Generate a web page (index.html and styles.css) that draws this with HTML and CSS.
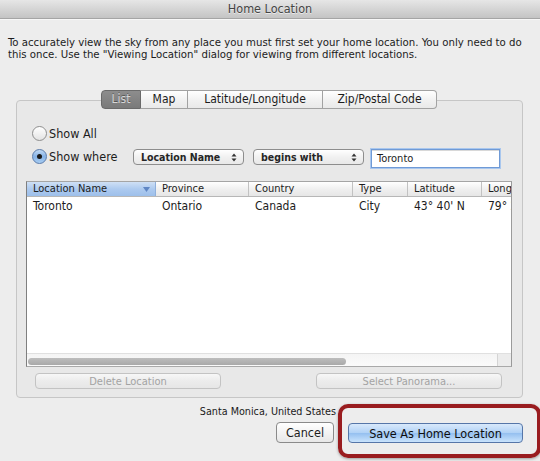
FILE: index.html
```html
<!DOCTYPE html>
<html>
<head>
<meta charset="utf-8">
<title>Home Location</title>
<link rel="stylesheet" href="styles.css">
</head>
<body>
<div class="window">
  <div class="titlebar">Home Location</div>
  <p class="desc">To accurately view the sky from any place you must first set your home location. You only need to do<br>this once. Use the "Viewing Location" dialog for viewing from different locations.</p>

  <div class="group">
    <div class="tabs">
      <span class="tab tab-list selected">List</span>
      <span class="tab tab-map">Map</span>
      <span class="tab tab-lat">Latitude/Longitude</span>
      <span class="tab tab-zip">Zip/Postal Code</span>
    </div>

    <div class="group-body">
      <div class="radio-row">
        <span class="radio"></span>
        <span class="radio-label">Show All</span>
      </div>
      <div class="where-row">
        <span class="radio checked"><span class="dot"></span></span>
        <span class="radio-label where-label">Show where</span>
        <span class="popup popup-field">Location Name
          <svg class="arrows" width="6" height="9" viewBox="0 0 6 9"><path d="M3 0.5 L5.5 3.5 H0.5 Z M3 8.5 L5.5 5.5 H0.5 Z" fill="#333"/></svg>
        </span>
        <span class="popup popup-op">begins with
          <svg class="arrows" width="6" height="9" viewBox="0 0 6 9"><path d="M3 0.5 L5.5 3.5 H0.5 Z M3 8.5 L5.5 5.5 H0.5 Z" fill="#333"/></svg>
        </span>
        <span class="textfield">Toronto</span>
      </div>

      <div class="table">
        <div class="thead">
          <span class="th c-name sorted">Location Name
            <svg class="sort" width="7" height="5" viewBox="0 0 7 5"><path d="M0 0 H7 L3.5 5 Z" fill="#5f86c4"/></svg>
          </span>
          <span class="th c-prov">Province</span>
          <span class="th c-country">Country</span>
          <span class="th c-type">Type</span>
          <span class="th c-lat">Latitude</span>
          <span class="th c-long">Longitude</span>
        </div>
        <div class="tbody">
          <div class="tr">
            <span class="td c-name">Toronto</span>
            <span class="td c-prov">Ontario</span>
            <span class="td c-country">Canada</span>
            <span class="td c-type">City</span>
            <span class="td c-lat">43° 40' N</span>
            <span class="td c-long">79° 23' W</span>
          </div>
        </div>
        <div class="hscroll">
          <div class="track"><div class="thumb"></div></div>
          <div class="corner"></div>
        </div>
      </div>

      <div class="btn-row">
        <span class="btn disabled wide">Delete Location</span>
        <span class="btn disabled wide">Select Panorama...</span>
      </div>
    </div>
  </div>

  <div class="footer">
    <div class="home-text">Santa Monica, United States</div>
    <div class="actions">
      <span class="btn cancel">Cancel</span>
      <span class="btn primary">Save As Home Location</span>
    </div>
  </div>

  <div class="highlight"></div>
</div>
</body>
</html>
```

FILE: styles.css
```css
* { box-sizing: border-box; }

html, body {
  margin: 0;
  padding: 0;
  background: #ececec;
}

body {
  font-family: "DejaVu Sans Condensed", "DejaVu Sans", sans-serif;
  color: #1c1c1c;
}

.window {
  position: relative;
  width: 540px;
  height: 461px;
  overflow: hidden;
  background: #ededed;
}

.titlebar {
  height: 19px;
  line-height: 18px;
  text-align: center;
  font-size: 12.5px;
  color: #444;
  text-shadow: 0 1px 0 rgba(255,255,255,0.6);
  background: linear-gradient(#e6e6e6, #c4c4c4);
  border-bottom: 1px solid #a5a5a5;
  box-shadow: 0 1px 0 #f7f7f7;
}

.desc {
  margin: 18px 0 0 8px;
  font-size: 11.3px;
  line-height: 12px;
  white-space: nowrap;
}

.group {
  margin: 39px 0 0 16px;
  width: 507px;
  height: 298px;
  border: 1px solid #c6c6c6;
  border-radius: 4px;
  background: #e8e8e8;
}

.tabs {
  display: flex;
  justify-content: center;
  margin-top: -11px;
  margin-left: -1px;
  height: 19px;
}

.tab {
  height: 19px;
  line-height: 17px;
  font-size: 12px;
  text-align: center;
  border: 1px solid #a2a2a2;
  border-left: none;
  background: linear-gradient(#ffffff, #f1f1f1 55%, #e9e9e9);
  color: #1c1c1c;
}

.tab-list { width: 40px; border-left: 1px solid #8a8a8a; border-radius: 4px 0 0 4px; }
.tab-map { width: 47px; }
.tab-lat { width: 135px; }
.tab-zip { width: 114px; border-radius: 0 4px 4px 0; }

.tab.selected {
  background: linear-gradient(#8d8d8d, #7a7a7a);
  border-color: #6a6a6a;
  color: #d6d6d6;
  text-shadow: 0 -1px 0 rgba(0,0,0,0.35);
}

.group-body {
  padding: 17px 10px 0 9px;
}

.radio-row, .where-row {
  display: flex;
  align-items: flex-start;
  padding-left: 6px;
}

.radio-row { height: 15px; }

.where-row {
  margin-top: 8px;
  height: 19px;
}

.radio {
  position: relative;
  width: 15px;
  height: 15px;
  border-radius: 50%;
  border: 1px solid #8e8e8e;
  background: linear-gradient(#ffffff, #e3e3e3);
  flex: none;
}

.radio.checked {
  border-color: #5a7bab;
  background: linear-gradient(#c2daf4, #86b2e6 50%, #a8cdf2);
}

.radio .dot {
  position: absolute;
  left: 4px;
  top: 4px;
  width: 5px;
  height: 5px;
  border-radius: 50%;
  background: #1a1a1a;
}

.radio-label {
  margin-left: 2px;
  font-size: 12.5px;
  line-height: 15px;
}

.where-label {
  width: 84px;
  flex: none;
}

.popup {
  display: flex;
  align-items: center;
  justify-content: space-between;
  height: 16px;
  padding: 0 6px 0 7px;
  font-size: 10.5px;
  font-weight: bold;
  color: #262626;
  border: 1px solid #8d8d8d;
  border-radius: 4px;
  background: linear-gradient(#ffffff, #f1f1f1 50%, #e8e8e8);
}

.popup-field { width: 111px; }
.popup-op { margin-left: 9px; width: 111px; }

.arrows { flex: none; }

.textfield {
  margin-left: 7px;
  width: 129px;
  height: 19px;
  padding: 0 5px;
  font-size: 11px;
  line-height: 17px;
  background: #fff;
  border: 1px solid #6f9ad6;
  box-shadow: 0 0 0 1px #a9c7ee, inset 0 1px 0 #d8d8d8;
}

.table {
  margin-top: 13px;
  width: 486px;
  height: 186px;
  display: flex;
  flex-direction: column;
  background: #fff;
  border-left: 1px solid #7f7f7f;
  border-top: 1px solid #a5a5a5;
  border-right: 1px solid #9a9a9a;
  border-bottom: 1px solid #a9a9a9;
  overflow: hidden;
}

.thead, .tr {
  display: flex;
  white-space: nowrap;
}

.thead {
  height: 15px;
  flex: none;
  background: linear-gradient(#ffffff, #f0f0f0 50%, #e6e6e6);
  border-bottom: 1px solid #b7b7b7;
}

.th {
  position: relative;
  flex: none;
  font-size: 11px;
  line-height: 14px;
  padding-left: 6px;
  border-right: 1px solid #c2c2c2;
  overflow: hidden;
}

.th.sorted {
  background: linear-gradient(#cfe0f5, #adcaef 50%, #9dbfea);
  border-right-color: #8fb0dc;
}

.sort {
  position: absolute;
  right: 5px;
  top: 5px;
}

.c-name { width: 129px; }
.c-prov { width: 93px; }
.c-country { width: 104px; }
.c-type { width: 55px; }
.c-lat { width: 74px; }
.c-long { width: 80px; border-right: none; }

.tbody {
  flex: 1;
}

.tr { height: 18px; }

.td {
  flex: none;
  font-size: 12px;
  line-height: 18px;
  padding-left: 6px;
  overflow: hidden;
}

.hscroll {
  flex: none;
  display: flex;
  height: 13px;
  border-top: 1px solid #e0e0e0;
}

.track {
  flex: 1;
  background: linear-gradient(#f4f4f4, #fafafa);
  padding: 4px 0 0 1px;
}

.thumb {
  width: 318px;
  height: 7px;
  border-radius: 4px;
  background: linear-gradient(#bdbdbd, #a9a9a9);
}

.corner {
  width: 14px;
  flex: none;
  background: #ececec;
  border-left: 1px solid #d4d4d4;
}

.btn-row {
  display: flex;
  justify-content: space-between;
  margin-top: 6px;
  padding: 0 10px 0 9px;
}

.btn {
  display: inline-flex;
  align-items: center;
  justify-content: center;
  white-space: nowrap;
}

.btn.disabled {
  height: 16px;
  font-size: 11px;
  color: #a3a3a3;
  border: 1px solid #c3c3c3;
  border-radius: 4px;
  background: linear-gradient(#f7f7f7, #ececec 50%, #e6e6e6);
}

.wide { width: 186px; }

.footer {
  margin-top: 8px;
}

.home-text {
  text-align: right;
  padding-right: 204px;
  font-size: 10.7px;
  line-height: 12px;
  color: #1a1a1a;
}

.actions {
  display: flex;
  justify-content: flex-end;
  align-items: flex-start;
  gap: 14px;
  margin-top: 4px;
  padding-right: 17px;
}

.cancel {
  width: 58px;
  height: 21px;
  font-size: 12.5px;
  border: 1px solid #8a8a8a;
  border-radius: 4px;
  background: linear-gradient(#ffffff, #f3f3f3 50%, #e7e7e7);
}

.primary {
  margin-top: 1px;
  width: 175px;
  height: 20px;
  font-size: 12.5px;
  border: 1px solid #5676a8;
  border-radius: 4px;
  background: linear-gradient(#d9e9fb, #b1d2f6 48%, #95c0f0 52%, #c9e3fc);
  color: #0e0e0e;
}

.highlight {
  position: absolute;
  left: 338px;
  top: 404px;
  width: 203px;
  height: 54px;
  border: 4px solid #991c1f;
  border-radius: 10px;
  box-shadow: 0 1px 3px rgba(0,0,0,0.35);
}
```
